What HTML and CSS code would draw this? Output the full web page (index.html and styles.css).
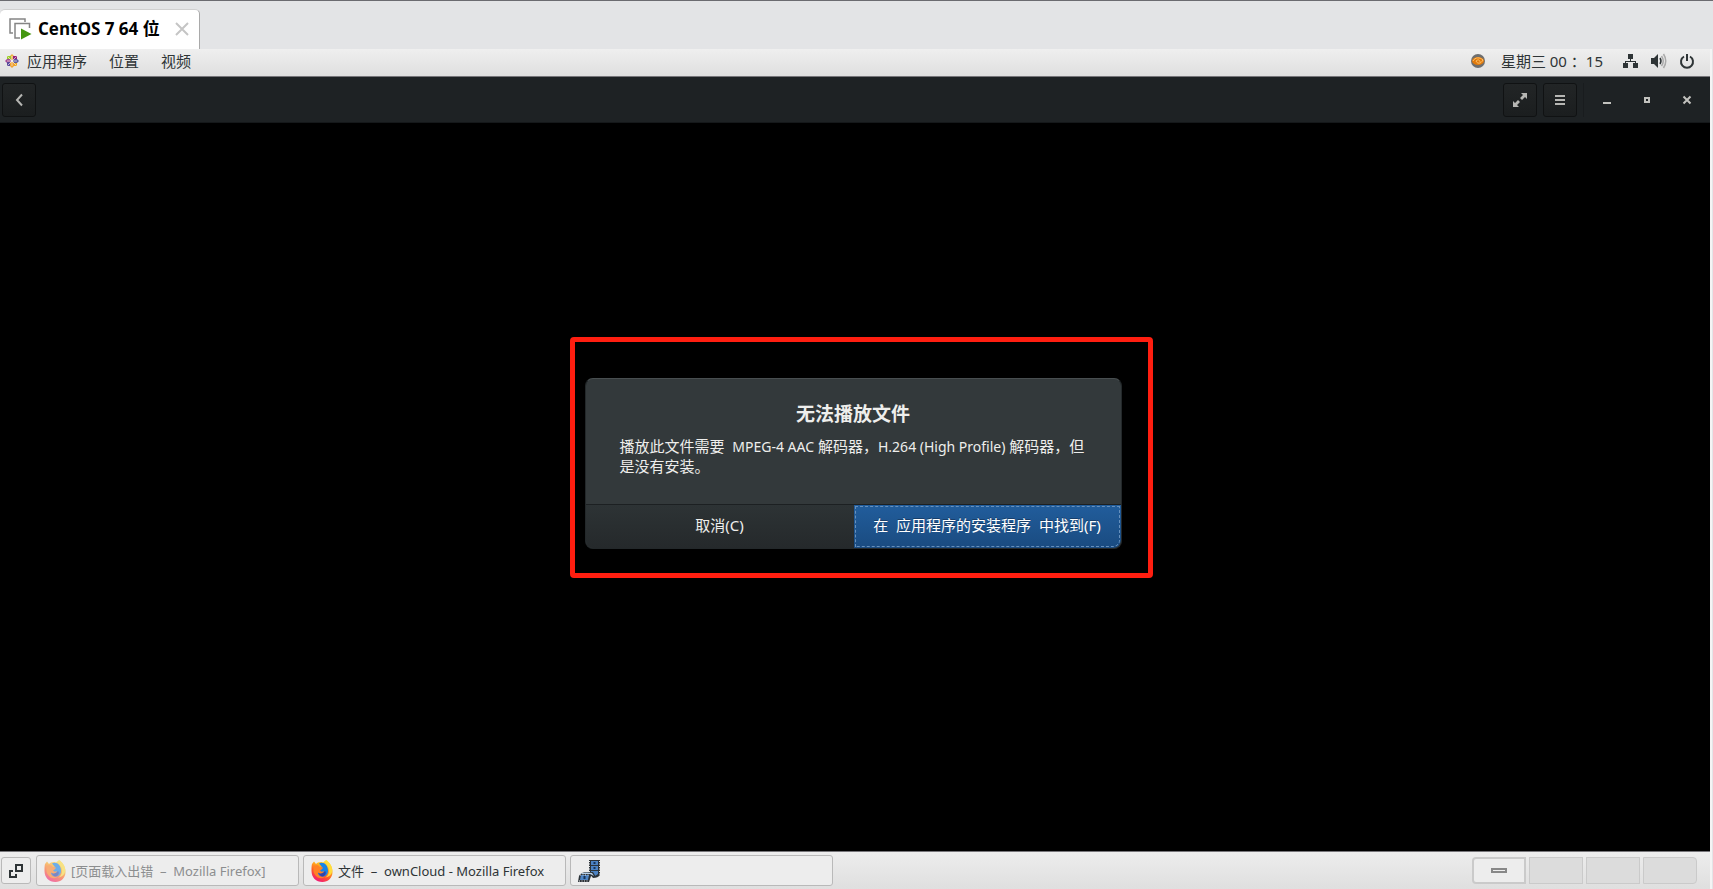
FILE: index.html
```html
<!DOCTYPE html>
<html lang="zh-CN">
<head>
<meta charset="utf-8">
<title>CentOS 7 64 位</title>
<link rel="stylesheet" href="styles.css">
</head>
<body>
<svg class="defs" aria-hidden="true">
  <defs>
    <linearGradient id="fx-body" x1="0.8" y1="0" x2="0.3" y2="1">
      <stop offset="0" stop-color="#fff04a"/><stop offset="0.35" stop-color="#ffb020"/><stop offset="0.65" stop-color="#ff5a28"/><stop offset="1" stop-color="#f0147c"/>
    </linearGradient>
    <symbol id="firefox" viewBox="0 0 22 22">
      <path fill="url(#fx-body)" d="M1 4L3 1.500L5 4C6.500 2.500 9 1.500 12 2.500L15 0C18 2 21.500 6 21.500 12C21.500 18 17 22 11.500 22C5 22 .5 17.500 .5 11C.5 8 .5 6 1 4Z"/>
      <path fill="#1683e8" d="M8 3.500C12 1 17 4.500 17 10.500C17 14.500 14.500 16.500 11.500 16.500C8.500 16.500 7 14.500 6.500 12.500L10.500 12L8 9L11 7Z"/>
      <path fill="#3444a8" d="M7.500 12C9 14 12 13.500 14 11C16 13 14 16.500 11 16.500C9 16 7.500 14 7.500 12Z"/>
      <path fill="#ff8126" d="M2.500 6C5 4.500 8 5 8.500 7L12 7.500C11.500 9.500 9.500 9.500 9 10.500C9.500 12 11 12 13 11C12 14 8.500 14 7 12.500C6.500 16 11 18 14 16.500C11 20 3.500 18 2.500 11Z"/>
      <path fill="#ffdc3d" d="M15 0C14 4 19 7 18 12C17.500 15 16 16.500 14 17.500C20 17 22 12 21 8C20 4 17 1.500 15 0Z"/>
    </symbol>
  </defs>
</svg>
<div class="screen">
  <header class="tabs">
    <div class="tab">
      <svg class="tab-icon" width="24" height="24" viewBox="0 0 24 24"><path d="M5 16H2V2H17V5" fill="none" stroke="#858585" stroke-width="1.500"/><path d="M12 21H7V6.500H21.500V11" fill="none" stroke="#858585" stroke-width="1.500"/><path d="M13 11.500L23.500 17L13 22.500Z" fill="#43960f"/></svg>
      <span class="tab-name">CentOS 7 64 位</span>
      <button class="tab-close" type="button" aria-label="关闭标签"><svg width="14" height="14" viewBox="0 0 14 14"><path d="M1 1L13 13M13 1L1 13" stroke="#c5c5c5" stroke-width="2"/></svg></button>
    </div>
  </header>
  <div class="desktop">
    <nav class="panel">
      <button type="button" class="menu apps"><svg width="14" height="14" viewBox="0 0 14 14"><path d="M7 0L9 2V6H5V2Z" fill="#f0b040"/><path d="M2 2H6V6H2Z" fill="#9ccd2a"/><path d="M8 2H12V6H8Z" fill="#932279"/><path d="M0 7L2 5H6V9H2Z" fill="#a54a93"/><path d="M2 8H6V12H2Z" fill="#5a4a9c"/><path d="M8 8H12V12H8Z" fill="#efa724"/><path d="M8 5H12L14 7L12 9H8Z" fill="#5a5aa0"/><path d="M5 8H9V12L7 14L5 12Z" fill="#f0a030"/><path d="M2.500 2.500L11.500 11.500M11.500 2.500L2.500 11.500M7 2V12M2 7H12" stroke="#f4eeee" stroke-width=".7"/></svg>应用程序</button>
      <button type="button" class="menu">位置</button>
      <button type="button" class="menu">视频</button>
      <div class="status">
        <svg width="14" height="16" viewBox="0 0 14 16"><circle cx="7" cy="8" r="7" fill="#6e6e6e"/><ellipse cx="7" cy="8" rx="6" ry="4" fill="#e17a0c"/><path d="M2 8C4 4 9 4 12 7C10 11 6 11 5 8C7 6 9 7 9 9" fill="none" stroke="#ffc36b"/></svg>
        <time>星期三&nbsp;00&nbsp;：15</time>
        <svg class="net" width="16" height="16" viewBox="0 0 16 16" fill="#2e3436"><path d="M5 1H10V6H5Z"/><path d="M7 6H8V8H13V11H12V9H3V11H2V8H7Z"/><path d="M0 10H5V15H0ZM10 10H15V15H10Z"/></svg>
        <svg class="vol" width="16" height="16" viewBox="0 0 16 16"><path d="M0 5H3L7 1V15L3 11H0Z" fill="#2e3436"/><path d="M9 5Q11 8 9 11" fill="none" stroke="#2e3436" stroke-width="1.500"/><path d="M10.500 3Q14 8 10.500 13M12.500 1Q17 8 12.500 15" fill="none" stroke="#aaa" stroke-width="1.500"/></svg>
        <svg width="16" height="16" viewBox="0 0 16 16"><path d="M5 3.500A6 6 0 1 0 11 3.500M8 1V8" fill="none" stroke="#2e3436" stroke-width="2"/></svg>
      </div>
    </nav>
    <div class="toolbar">
      <button type="button" class="tool" aria-label="返回"><svg width="16" height="16" viewBox="0 0 16 16"><path d="M11 2.500L6 8L11 13.500" fill="none" stroke="#b6b6b3" stroke-width="2"/></svg></button>
      <div class="tools">
        <button type="button" class="tool" aria-label="全屏"><svg width="16" height="16" viewBox="0 0 16 16"><path fill="#b6b6b3" d="M9 1H15V7L13 5L10 8L8 6L11 3ZM1 9L3 11L6 8L8 10L5 13L7 15H1Z"/></svg></button>
        <button type="button" class="tool" aria-label="菜单"><svg width="16" height="16" viewBox="0 0 16 16"><path d="M3 4H13M3 8H13M3 12H13" stroke="#b6b6b3" stroke-width="2"/></svg></button>
        <span class="sep"></span>
        <button type="button" class="win" aria-label="最小化"><svg width="16" height="16" viewBox="0 0 16 16"><path d="M4 11H12" stroke="#c2c2be" stroke-width="2"/></svg></button>
        <button type="button" class="win" aria-label="最大化"><svg width="16" height="16" viewBox="0 0 16 16"><path d="M6 6H10V10H6Z" fill="none" stroke="#c2c2be" stroke-width="2"/></svg></button>
        <button type="button" class="win" aria-label="关闭"><svg width="16" height="16" viewBox="0 0 16 16"><path d="M4.500 4.500L11.500 11.500M11.500 4.500L4.500 11.500" stroke="#c2c2be" stroke-width="2"/></svg></button>
      </div>
    </div>
    <main class="video">
      <div class="mark">
        <section class="dialog" role="dialog" aria-labelledby="dlg-title">
          <div class="message">
            <h1 id="dlg-title">无法播放文件</h1>
            <p>播放此文件需要&nbsp; <span class="latin">MPEG-4 AAC</span> 解码器，<span class="latin">H.264 (High Profile)</span> 解码器，但是没有安装。</p>
          </div>
          <div class="actions">
            <button type="button" class="action">取消(C)</button>
            <button type="button" class="action primary">在&nbsp; 应用程序的安装程序&nbsp; 中找到(F)</button>
          </div>
        </section>
      </div>
    </main>
    <footer class="taskbar">
      <button type="button" class="show" aria-label="显示桌面"><svg width="14" height="14" viewBox="0 0 14 14"><path d="M7 1H13V7H7ZM4 7H1V13H7V10" fill="none" stroke="#2e3436" stroke-width="2"/></svg></button>
      <button type="button" class="task dim"><svg width="22" height="22"><use href="#firefox"/></svg><span>[页面载入出错&nbsp; –&nbsp; Mozilla Firefox]</span></button>
      <button type="button" class="task"><svg width="22" height="22"><use href="#firefox"/></svg><span>文件&nbsp; –&nbsp; ownCloud - Mozilla Firefox</span></button>
      <button type="button" class="task" aria-label="视频"><svg width="22" height="22" viewBox="0 0 22 22"><path d="M11 0H22V15Q20 18 15 18L11 13Z" fill="#2b3238"/><path d="M13 1H20V5H13ZM13 6H20V10H13ZM13 11H20V14L17 16L13 12Z" fill="#4c83c4"/><path d="M11.500 1V13M21.500 1V15" stroke="#e8e8e8" stroke-dasharray="1 1.500"/><path d="M1 16Q3 12 9 12H15L18 17L13 16L11 22H0Z" fill="#2b3238"/><path d="M4 13Q9 12 14 13L16 16L12 14H3Z" fill="#b4cee8"/><path d="M3 15H11L10 20H2Z" fill="#4c83c4"/><path d="M1 21H11M2 15H12" stroke="#e8e8e8" stroke-dasharray="1 1.500"/><path d="M16.500 2V4M16.500 7V9M6.500 16V19" stroke="#173456" stroke-width="2"/></svg></button>
      <div class="spaces">
        <button type="button" class="space current" aria-label="工作区 1"><i></i></button>
        <button type="button" class="space" aria-label="工作区 2"></button>
        <button type="button" class="space" aria-label="工作区 3"></button>
        <button type="button" class="space" aria-label="工作区 4"></button>
      </div>
    </footer>
  </div>
</div>
</body>
</html>
```
FILE: styles.css
```css
* { box-sizing: border-box; }
body { margin: 0; font-family: "Noto Sans", "Noto Sans CJK SC", sans-serif; font-size: 14px; color: #2e3436; }
button { margin: 0; padding: 0; border: 0; background: none; font: inherit; color: inherit; }
svg { display: block; flex: none; }
.defs { position: absolute; width: 0; height: 0; }
.screen { min-height: 100vh; display: flex; flex-direction: column; background: #e3e4e6; border-top: 1px solid #6b6b70; }
.tabs { padding-top: 8px; display: flex; }
.tab { height: 40px; width: 200px; display: flex; align-items: center; padding: 0 10px 2px 8px; background: #fff; border-right: 1px solid #a9a9a9; border-top: 1px solid #d0d0d0; border-radius: 5px 5px 0 0; color: #000; }
.tab-name { margin-left: 6px; font-family: "Open Sans", "Noto Sans CJK SC", sans-serif; font-weight: 700; font-size: 17px; line-height: 24px; white-space: nowrap; flex: 1; }
.desktop { flex: 1; display: flex; flex-direction: column; margin-right: 1px; border-right: 2px solid #f4f4f4; }
.panel { height: 28px; display: flex; align-items: center; padding: 0 15px 3px 5px; background: linear-gradient(#efefef, #dfdfdf); border-bottom: 1px solid #77767a; font-size: 15px; line-height: 22px; }
.menu { display: flex; align-items: center; gap: 8px; margin-right: 22px; white-space: nowrap; }
.status { margin-left: auto; display: flex; align-items: center; gap: 12px; }
time { margin: 0 8px 0 4px; white-space: nowrap; font-family: "Noto Sans", "Noto Sans CJK TC", sans-serif; }
.toolbar { height: 46px; display: flex; align-items: center; justify-content: space-between; padding: 0 6px 0 2px; background: #1e2224; border-bottom: 1px solid #15181a; }
.tools { display: flex; align-items: center; gap: 6px; }
.tool, .win { width: 34px; height: 34px; display: grid; place-items: center; }
.tool { border: 1px solid #101213; border-radius: 3px; background: linear-gradient(#222526, #1b1e1f); }
.sep { width: 1px; height: 34px; background: #191c1e; }
.video { flex: 1; background: #000; display: flex; align-items: center; justify-content: center; }
.mark { width: 583px; margin: 0 0 60px 12px; padding: 36px 26px 24px 10px; border: 5px solid #ff1e10; border-radius: 4px; }
.dialog { border: 1px solid #23282a; border-top-color: #484e50; border-radius: 8px; background: #33393b; color: #eeeeec; overflow: hidden; }
.message { padding: 22px 34px 0; height: 125px; }
h1 { margin: 0; font-size: 19px; line-height: 27px; font-weight: 700; text-align: center; }
p { margin: 8px 0 0; font-size: 15px; line-height: 20px; }
.latin { font-size: 14px; line-height: 1; }
.actions { display: grid; grid-template-columns: 268px 1fr; border-top: 1px solid #1c2022; }
.action { height: 43px; font-size: 15px; line-height: 22px; padding-bottom: 2px; background: linear-gradient(#2d3335, #25292b); }
.primary { background: linear-gradient(#215d9c, #1a4b80); color: #fff; outline: 1px dashed #6690bd; outline-offset: -2px; border-radius: 0 0 8px 0; text-shadow: 0 -1px #173e6a; }
.taskbar { height: 38px; display: flex; align-items: center; gap: 4px; padding: 0 13px 0 1px; background: linear-gradient(#ededed, #dfdfdf); border-top: 1px solid #77767a; }
.show, .task { border: 1px solid #b9b9b9; border-radius: 3px; background: #ededed; }
.show { width: 30px; height: 27px; margin-right: 1px; display: grid; place-items: center; }
.task { width: 263px; height: 31px; display: flex; align-items: center; gap: 5px; padding: 0 7px; font-size: 13px; white-space: nowrap; }
.dim { color: #8c8e8f; }
.dim svg { opacity: .6; }
.spaces { margin-left: auto; display: flex; gap: 3px; }
.space { width: 54px; height: 27px; background: #dcdcdc; border: 1px solid #cacaca; }
.space:last-child { border-radius: 0 4px 4px 0; }
.current { display: grid; place-items: center; border: 2px solid #cacaca; background: #ededed; border-radius: 4px 0 0 4px; }
.current i { width: 16px; height: 5px; border: 2px solid #888; background: #eee; }
```
